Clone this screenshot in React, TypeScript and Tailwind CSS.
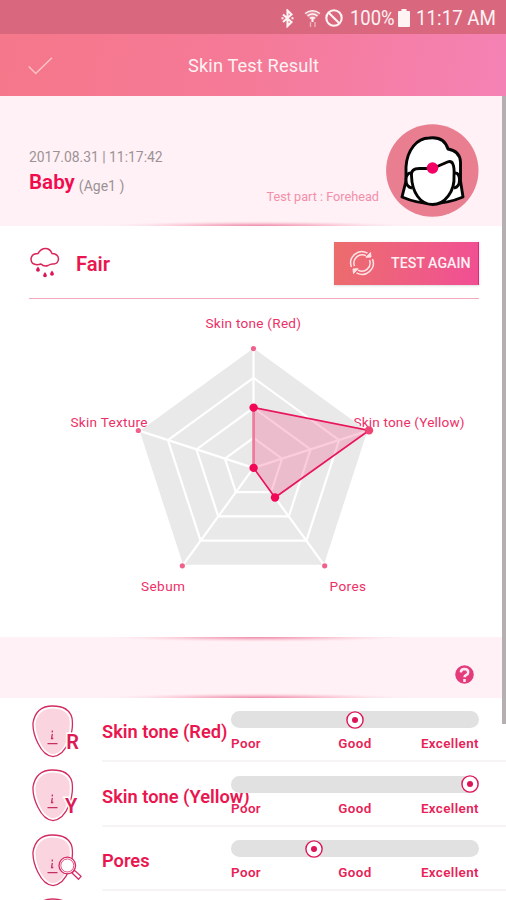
import React from "react";

const font = "font-['Roboto','Liberation_Sans',sans-serif]";

// Soft highlight that fades out towards both ends of a section edge
function Glow({ flip = false }: { flip?: boolean }) {
  return (
    <svg className="block h-[5px] w-full" viewBox="0 0 506 5" preserveAspectRatio="none">
      <defs>
        <radialGradient id={flip ? "glowTop" : "glowBottom"} gradientUnits="userSpaceOnUse" cx="0" cy="0" r="1"
          gradientTransform={flip ? "translate(258 0) scale(150 5)" : "translate(258 5) scale(150 5)"}>
          <stop offset="0" stopColor="#ee88a9" />
          <stop offset="0.4" stopColor="#f4a6be" stopOpacity="0.75" />
          <stop offset="1" stopColor="#ffd6e2" stopOpacity="0" />
        </radialGradient>
      </defs>
      <rect width="506" height="5" fill={flip ? "url(#glowTop)" : "url(#glowBottom)"} />
    </svg>
  );
}

function StatusBar() {
  return (
    <div className="flex h-[34px] items-center bg-[#d9687e] pl-[281px] pt-[2px] text-[#fff3f4]">
      <svg className="h-[19px] w-[13px] shrink-0" viewBox="0 0 13 19" fill="none" stroke="currentColor" strokeWidth="2.1">
        <path d="M2 5.5 10.5 13 6.5 17V1.5L10.5 5.5 2 13" />
        <path d="M.5 9.2h2M10.5 9.2h2" />
      </svg>
      <svg className="ml-[10px] h-[19px] w-[17px] shrink-0" viewBox="0 0 17 19" fill="none" stroke="currentColor">
        <path d="M1 4.5Q8.5-.8 16 4.5L8.5 13Z" fill="currentColor" fillOpacity=".25" stroke="none" />
        <path d="M1 4.5Q8.5-.8 16 4.5M3.5 7Q8.5 3 13.5 7M6 9.5Q8.5 7.5 11 9.5" strokeWidth="1.5" />
        <path d="M8.5 9v4" strokeWidth="2" />
        <path d="M6.5 13v5M11 13v5" strokeWidth="1.4" opacity=".5" />
      </svg>
      <svg className="ml-[4px] h-[18px] w-[18px] shrink-0" viewBox="0 0 18 18" fill="none" stroke="currentColor" strokeWidth="2.1">
        <circle cx="9" cy="9" r="7.7" />
        <path d="m3.7 3.7 10.6 10.6" />
      </svg>
      <span className="ml-[7px] w-[46px] shrink-0 origin-left scale-x-[0.9] whitespace-nowrap text-[20.5px] leading-[24px]">100%</span>
      <svg className="ml-[2px] h-[18px] w-[12px] shrink-0" viewBox="0 0 12 18" fill="currentColor">
        <path d="M3.5 0h5v2H11q1 0 1 1v14q0 1-1 1H1q-1 0-1-1V3q0-1 1-1h2.5Z" />
      </svg>
      <span className="ml-[6px] w-[80px] shrink-0 origin-left scale-x-[0.915] whitespace-nowrap text-[20.5px] leading-[24px]">11:17 AM</span>
    </div>
  );
}

function AppBar() {
  return (
    <div className="flex h-[62px] items-center bg-linear-100 from-[#f5778a] via-[#f57a98] to-[#f482b4] pl-[28px]">
      <svg className="mt-px h-[18px] w-[25px] shrink-0" viewBox="0 0 25 18" fill="none" stroke="#ffc3c4" strokeWidth="1.5">
        <path d="m.7 9.5 7 7L24 .7" />
      </svg>
      <h1 className="ml-[135px] whitespace-nowrap pt-[2px] text-[18.2px] tracking-[0.15px] text-[#fff2f3]">Skin Test Result</h1>
    </div>
  );
}

function ForeheadIcon() {
  return (
    <svg className="size-[94px] shrink-0" viewBox="0 0 94 94">
      <circle cx="47.3" cy="47.5" r="46.2" fill="#e97e91" />
      <g fill="#fff" stroke="#050505" strokeWidth="2.9" strokeLinejoin="round">
        <path d="M21 53V44C22 27 32 15 44 15Q59 13 63 26Q75 28 75.5 39V58L78 74Q47 87 17 74L21 58Z" />
        <path d="M26 50q-5 0-5 7t6 8M70 50q4.5 0 4.5 7t-5.5 8" />
        <path d="M26.5 53q-1-7.500 8-7.500h13l15-6.500q7.500-3 6.500 14c1 15-9 28.500-21.500 28.500S27 69 26.500 53Z" />
      </g>
      <circle cx="47.5" cy="45" r="5.8" fill="#f20063" />
    </svg>
  );
}

function Summary() {
  return (
    <section className="flex h-[130px] flex-col bg-[#fff1f5]">
      <div className="flex h-[125px] justify-between pl-[29px] pr-[27px] pt-[27px]">
        <div className="pt-[24px]">
          <div className="h-[20px] whitespace-nowrap text-[13.9px] leading-[20px] text-[#9c9196]">2017.08.31 | 11:17:42</div>
          <div className="flex h-[27px] items-start">
            <span className="pt-[2px] text-[20.6px] font-semibold leading-[27px] text-[#f20a4d]">Baby</span>
            <span className="ml-[4px] pt-[6px] text-[14px] leading-[27px] text-[#9c9196]">(Age1 )</span>
          </div>
        </div>
        <div className="flex">
          <span className="mr-[6px] mt-[64px] h-[20px] whitespace-nowrap text-[12.7px] leading-[20px] text-[#f48eaa]">Test part : Forehead</span>
          <ForeheadIcon />
        </div>
      </div>
      <Glow />
    </section>
  );
}

function Verdict() {
  return (
    <div className="ml-[29px] mr-[27px] flex h-[73px] items-center border-b-[1.5px] border-[#f5a9bd] pt-[2px]">
      <svg className="h-[32px] w-[32px] shrink-0" viewBox="0 0 32 32" fill="none" stroke="#dc2358" strokeWidth="1.5">
        <path d="M9 6.5Q12 1.5 16.5 1.5T23 6.5Q29.5 7 29.5 12 29 17 24.5 17 22 16.5 19 18.5 15 20 12 17Q8 18.5 5 17 2 16 2 11.5 3 6.5 9 6.5Z" />
        <g fill="#dc1655" stroke="none">
          <path d="M9 19.5q3.800 4.800 0 5.300-3.800-.5 0-5.300ZM16 25q3.800 4.800 0 5.300-3.800-.5 0-5.300ZM23 23.500q3.800 4.800 0 5.300-3.800-.5 0-5.300Z" />
        </g>
      </svg>
      <span className="ml-[15px] pt-[2px] text-[20.2px] font-semibold text-[#e91750]">Fair</span>
      <button className="ml-auto flex h-[43px] w-[145px] items-center border-r border-[#e92573] bg-linear-100 from-[#ec6d6b] to-[#f14e94] pl-[15px] shadow-sm">
        <svg className="size-[26px] shrink-0" viewBox="0 0 26 26" fill="none" stroke="#ffe3e5">
          <path d="M2.5 17A11.2 11.2 0 0 1 18.5 3.2M23.5 9A11.2 11.2 0 0 1 7.5 22.8" strokeWidth="1.5" />
          <path d="M5.5 16A8.2 8.2 0 0 1 17 5.8M20.5 10A8.2 8.2 0 0 1 9 20.2" strokeWidth="1.5" />
          <path d="m21.500 2.500.5 4.500-5 .3ZM4.500 23.500 4 19l5-.3Z" fill="#ffe3e5" strokeWidth="1" />
        </svg>
        <span className="ml-[16px] whitespace-nowrap pt-px text-[14.2px] font-medium text-[#fff1f4]">TEST AGAIN</span>
      </button>
    </div>
  );
}

const CX = 253.5;
const CY = 168.9;
const ring = (r: number): [number, number][] =>
  [0, 1, 2, 3, 4].map((i) => {
    const a = ((-90 + i * 72) * Math.PI) / 180;
    return [CX + r * Math.cos(a), CY + r * Math.sin(a)];
  });
const points = (p: [number, number][]) => p.map((q) => q.join(",")).join(" ");

function Radar() {
  const result: [number, number][] = [[253.6, 108.6], [369, 131.4], [275, 198.5], [253.6, 168.9]];
  return (
    <svg className="block h-[337.5px] w-full" viewBox="0 0 506 337.5">
      <g className={font} fill="#ed2f67" fontSize="13.6">
        <text x="205.5" y="29" textLength="95.5">Skin tone (Red)</text>
        <text x="353.5" y="127.8" textLength="111">Skin tone (Yellow)</text>
        <text x="70.5" y="127.8" textLength="77">Skin Texture</text>
        <text x="141" y="291.8" textLength="44">Sebum</text>
        <text x="329.5" y="291.8" textLength="36.5">Pores</text>
      </g>
      <polygon points={points(ring(119.7))} fill="#e9e9e9" />
      <g fill="none" stroke="#fff" strokeWidth="2.2">
        {[30, 60, 90].map((r) => <polygon key={r} points={points(ring(r))} />)}
        {ring(119.7).map(([x, y], i) => <line key={i} x1={CX} y1={CY} x2={x} y2={y} />)}
      </g>
      {ring(121.1).map(([x, y], i) => <circle key={i} cx={x} cy={i === 0 ? 49.6 : y} r="2.6" fill="#f0628c" />)}
      <polygon points={points(result)} fill="#f0427c" fillOpacity=".27" stroke="#e8155a" strokeWidth="1.7" />
      <line x1="253.6" y1="108" x2="253.6" y2="168" stroke="#ec7d9e" strokeWidth="2.5" />
      {result.map(([x, y], i) => (
        <circle key={i} cx={x} cy={y} r="4.2" fill={i === 1 ? "#ef4576" : "#f20756"} />
      ))}
    </svg>
  );
}

function HelpBand() {
  return (
    <div className="flex h-[61px] flex-col bg-[#fff1f5]">
      <Glow flip />
      <div className="flex flex-1 items-center justify-end pr-[32px] pt-[14px]">
        <svg className="size-[19px]" viewBox="0 0 19 19">
          <circle cx="9.5" cy="9.5" r="9.3" fill="#e43b7c" />
          <path d="M5.8 7.3q.2-3.300 3.700-3.300 3.700.1 3.700 3.200 0 1.800-2 2.800-1.700.8-1.700 2.300M9.500 14v3" fill="none" stroke="#ffeaf2" strokeWidth="2.5" />
        </svg>
      </div>
      <Glow />
    </div>
  );
}

type Badge = "R" | "Y" | "lens" | "none";

function Face({ badge }: { badge: Badge }) {
  return (
    <svg className="h-[54px] w-[52px] shrink-0" viewBox="0 0 52 54">
      <path d="M20.5 1C31 1 38 5 40 13c2 13-4 37-19 38.600C8 51 .5 28 1 18 3 6 10 1 20.500 1Z" fill="#fff" stroke="#d22c60" strokeWidth="1.3" />
      <path d="M20.5 3.5C30 3.5 35.5 7 37.5 14 39 27 34 47.5 21 49.300 10 48 3 28 3.500 18 5 9 11 3.500 20.500 3.500Z" fill="#fad5e0" />
      <path d="M20.3 25.500v2M20.300 29 19.600 33.500h1.700M15.500 38.600h10" fill="none" stroke="#c52e63" strokeWidth="1.3" />
      {(badge === "R" || badge === "Y") && (
        <text x={badge === "R" ? 34.2 : 33} y="43.8" fontSize="20" className={font} fontWeight="600" fill="#dc1a55" stroke="#fff" strokeWidth="3" paintOrder="stroke" textLength={badge === "R" ? 12.5 : 13}>{badge}</text>
      )}
      {badge === "lens" && (
        <g stroke="#d92762" fill="#fff" strokeWidth="1.3">
          <path d="m40 39 2.500-2.700 6.500 6-2.500 3Z" />
          <circle cx="35.3" cy="31.5" r="8.3" />
          <circle cx="35.3" cy="31.5" r="6.5" strokeWidth=".8" />
        </g>
      )}
    </svg>
  );
}

function Row({ label, value, badge }: { label: string; value: number; badge: Badge }) {
  return (
    <div className="flex h-[64.6px] shrink-0">
      <div className="w-[102px] shrink-0 pl-[32px] pt-[7px]"><Face badge={badge} /></div>
      <div className="flex flex-1 border-b-2 border-[#f6f4f5] pt-[0.6px]">
        <div className="w-[129px] shrink-0 whitespace-nowrap pt-[20px] text-[18.25px] font-semibold leading-[27px] text-[#e9164f]">{label}</div>
        <div className="w-[248px] shrink-0 pt-[13px]">
          <div className="flex h-[17px] items-center rounded-full bg-[#e1e1e1]">
            <svg className="size-[18px] shrink-0" style={{ marginLeft: `${value}px` }} viewBox="0 0 18 18">
              <circle cx="9" cy="9" r="8.1" fill="#fff" stroke="#dd1556" strokeWidth="1.4" />
              <circle cx="9" cy="9" r="3" fill="#dd1556" />
            </svg>
          </div>
          <div className="flex justify-between pt-[7px] text-[13.4px] font-semibold leading-[17px] tracking-[0.4px] text-[#e72257]">
            <span className="w-[60px]">Poor</span>
            <span>Good</span>
            <span className="flex w-[60px] justify-end">Excellent</span>
          </div>
        </div>
      </div>
    </div>
  );
}

export default function App() {
  return (
    <main className={`relative h-[900px] w-[506px] overflow-hidden bg-white ${font}`}>
      <StatusBar />
      <AppBar />
      <Summary />
      <Verdict />
      <Radar />
      <HelpBand />
      <Row label="Skin tone (Red)" value={115} badge="R" />
      <Row label="Skin tone (Yellow)" value={230} badge="Y" />
      <Row label="Pores" value={74} badge="lens" />
      <div className="pl-[32px] pt-[7px]">
        <Face badge="none" />
      </div>
      <div className="absolute right-0 top-[96px] h-[628px] w-[4.5px] bg-[#b5afb1]" />
    </main>
  );
}
